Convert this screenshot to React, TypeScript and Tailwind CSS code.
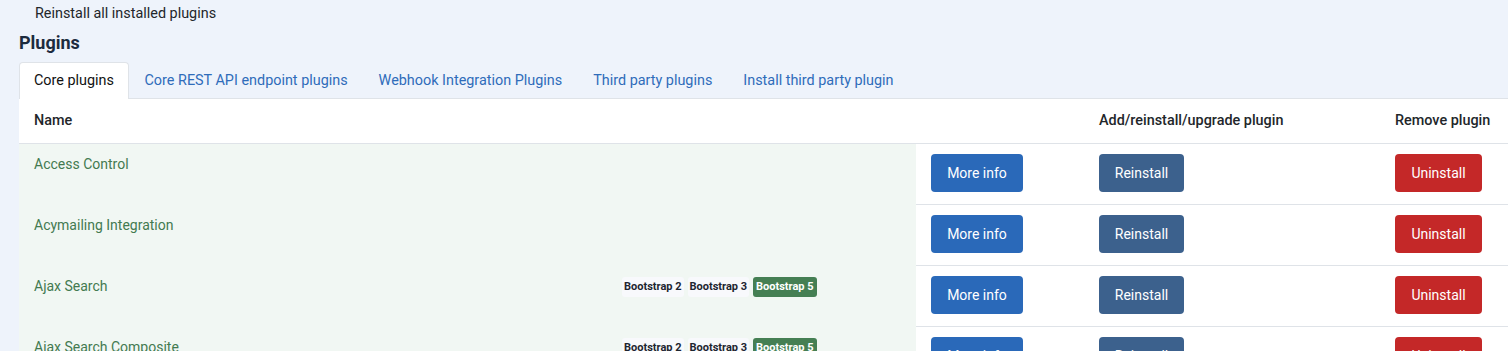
import React from 'react'

// Plugins admin page — core plugins tab

const tabs = [
  'Core plugins',
  'Core REST API endpoint plugins',
  'Webhook Integration Plugins',
  'Third party plugins',
  'Install third party plugin',
]

const plugins = [
  { name: 'Access Control', badges: false },
  { name: 'Acymailing Integration', badges: false },
  { name: 'Ajax Search', badges: true },
  { name: 'Ajax Search Composite', badges: true },
]

function Badges() {
  return (
    <div className="flex items-center gap-[4px] pt-[1px]">
      <span className="rounded-[3px] bg-[#f8f9fc] px-[2px] py-[3px] text-[11px] font-bold leading-[14px] text-[#1d2530]">
        Bootstrap 2
      </span>
      <span className="rounded-[3px] bg-[#f8f9fc] px-[2px] py-[3px] text-[11px] font-bold leading-[14px] text-[#1d2530]">
        Bootstrap 3
      </span>
      <span className="rounded-[3px] bg-[#457f53] px-[3px] py-[3px] text-[11px] font-bold leading-[14px] text-white">
        Bootstrap 5
      </span>
    </div>
  )
}

export default function App() {
  return (
    <div
      className="h-[351px] w-full overflow-hidden bg-[#eef3fb] text-[14px] text-[#22262a]"
      style={{ fontFamily: 'Roboto, "Noto Sans", sans-serif' }}
    >
      <div className="pl-[35px] pt-[5px] text-[14.4px] leading-[18px]">Reinstall all installed plugins</div>

      <div className="pl-[19px]">
        <h2 className="mt-[9px] text-[18px] font-bold leading-[22px] text-[#1c2b3e]">Plugins</h2>

        {/* Tabs */}
        <div className="mt-[8px] flex border-b border-[#dfe3e8] text-[14.4px]">
          {tabs.map((t, i) =>
            i === 0 ? (
              <div
                key={t}
                className="-mb-px rounded-t-[4px] border border-b-0 border-[#dfe3e8] bg-white px-[14px] pt-[9px] pb-[9px] leading-[18px] text-[#111]"
              >
                {t}
              </div>
            ) : (
              <div key={t} className="px-[15.5px] pt-[10px] pb-[8px] leading-[18px] text-[#2f6cba]">
                {t}
              </div>
            )
          )}
        </div>

        {/* Table */}
        <div className="w-[1489px] bg-white">
          <div className="grid h-[45px] grid-cols-[897px_168px_296px_128px] items-center border-b border-[#dfe3e8] text-[14.4px] font-medium">
            <div className="pl-[15px]">Name</div>
            <div />
            <div className="pl-[15px]">Add/reinstall/upgrade plugin</div>
            <div className="pl-[15px]">Remove plugin</div>
          </div>

          {plugins.map((p) => (
            <div key={p.name} className="grid h-[61px] grid-cols-[897px_168px_296px_128px]">
              <div className="grid grid-cols-[588px_1fr] items-start bg-[#f1f7f3] pl-[15px] pt-[10px]">
                <span className="leading-[20px] text-[#437a50]">{p.name}</span>
                {p.badges ? <Badges /> : <span />}
              </div>
              <div className="border-b border-[#dfe3e8] pl-[15px] pt-[10px]">
                <button className="h-[38px] w-[92px] rounded-[4px] bg-[#2a69b9] text-white">More info</button>
              </div>
              <div className="border-b border-[#dfe3e8] pl-[15px] pt-[10px]">
                <button className="h-[38px] w-[85px] rounded-[4px] bg-[#3c618d] text-white">Reinstall</button>
              </div>
              <div className="border-b border-[#dfe3e8] pl-[15px] pt-[10px]">
                <button className="h-[38px] w-[87px] rounded-[4px] bg-[#c42828] text-white">Uninstall</button>
              </div>
            </div>
          ))}
        </div>
      </div>
    </div>
  )
}
